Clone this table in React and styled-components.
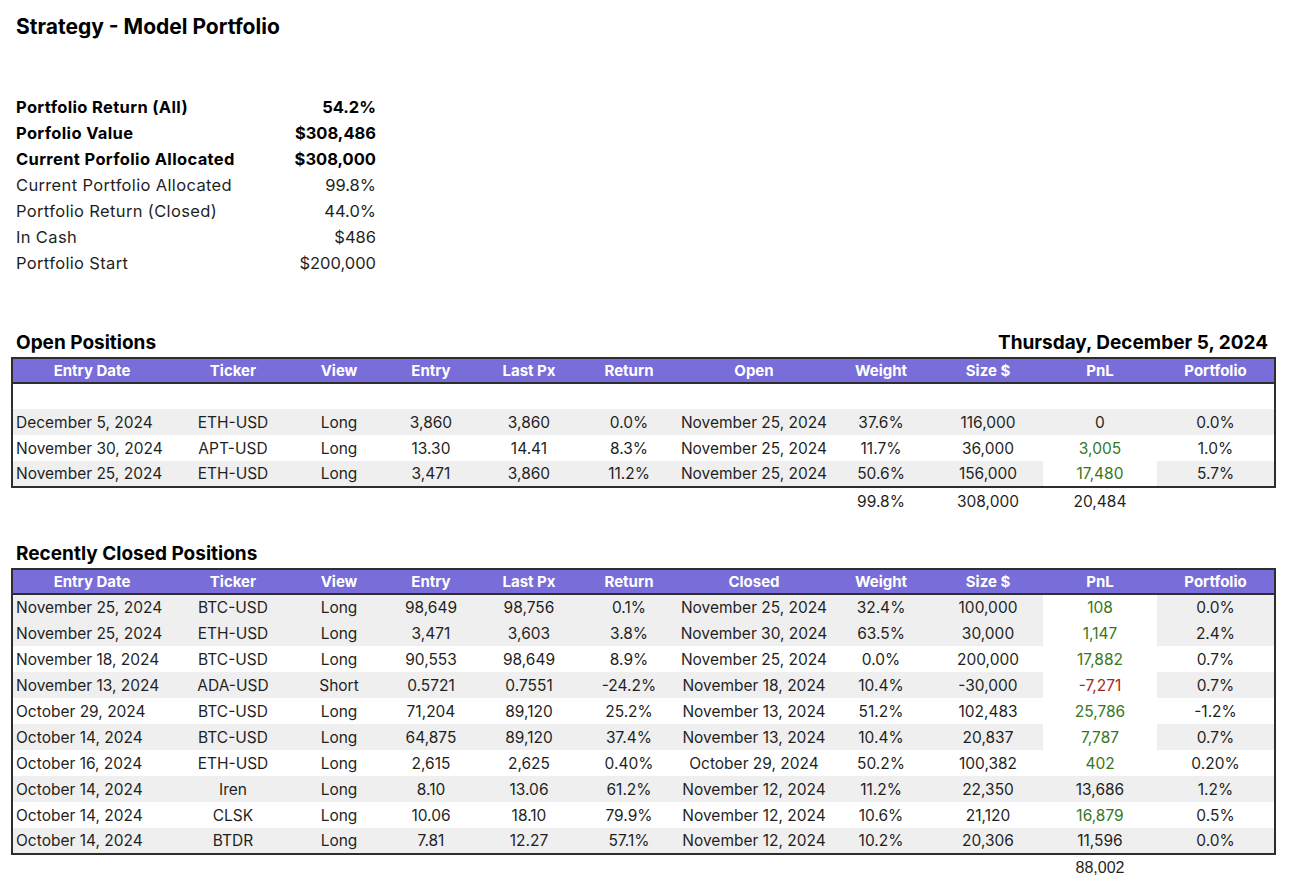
import styled, { createGlobalStyle } from 'styled-components'

const GlobalStyle = createGlobalStyle`
    body {
        margin: 0;
        background: #fff;
        font-family: Inter, "Liberation Sans", sans-serif;
        color: #1f1f1f;
    }
`

const GREEN = '#38761d'
const RED = '#a2281c'

const columnWidths = [159, 124, 88, 96, 100, 100, 150, 104, 110, 114, 118]

const summary = [
    { label: 'Portfolio Return (All)', value: '54.2%', bold: true },
    { label: 'Porfolio Value', value: '$308,486', bold: true },
    { label: 'Current Porfolio Allocated', value: '$308,000', bold: true },
    { label: 'Current Portfolio Allocated', value: '99.8%' },
    { label: 'Portfolio Return (Closed)', value: '44.0%' },
    { label: 'In Cash', value: '$486' },
    { label: 'Portfolio Start', value: '$200,000' },
]

const openRows = [
    { cells: null, band: false },
    { cells: ['December 5, 2024', 'ETH-USD', 'Long', '3,860', '3,860', '0.0%', 'November 25, 2024', '37.6%', '116,000', '0', '0.0%'], band: true },
    { cells: ['November 30, 2024', 'APT-USD', 'Long', '13.30', '14.41', '8.3%', 'November 25, 2024', '11.7%', '36,000', '3,005', '1.0%'], band: false, pnl: 'up' },
    { cells: ['November 25, 2024', 'ETH-USD', 'Long', '3,471', '3,860', '11.2%', 'November 25, 2024', '50.6%', '156,000', '17,480', '5.7%'], band: true, pnl: 'up', pnlPlain: true },
]

const closedRows = [
    { cells: ['November 25, 2024', 'BTC-USD', 'Long', '98,649', '98,756', '0.1%', 'November 25, 2024', '32.4%', '100,000', '108', '0.0%'], band: true, pnl: 'up', pnlPlain: true },
    { cells: ['November 25, 2024', 'ETH-USD', 'Long', '3,471', '3,603', '3.8%', 'November 30, 2024', '63.5%', '30,000', '1,147', '2.4%'], band: true, pnl: 'up', pnlPlain: true },
    { cells: ['November 18, 2024', 'BTC-USD', 'Long', '90,553', '98,649', '8.9%', 'November 25, 2024', '0.0%', '200,000', '17,882', '0.7%'], band: false, pnl: 'up' },
    { cells: ['November 13, 2024', 'ADA-USD', 'Short', '0.5721', '0.7551', '-24.2%', 'November 18, 2024', '10.4%', '-30,000', '-7,271', '0.7%'], band: true, pnl: 'down', pnlPlain: true },
    { cells: ['October 29, 2024', 'BTC-USD', 'Long', '71,204', '89,120', '25.2%', 'November 13, 2024', '51.2%', '102,483', '25,786', '-1.2%'], band: false, pnl: 'up' },
    { cells: ['October 14, 2024', 'BTC-USD', 'Long', '64,875', '89,120', '37.4%', 'November 13, 2024', '10.4%', '20,837', '7,787', '0.7%'], band: true, pnl: 'up', pnlPlain: true },
    { cells: ['October 16, 2024', 'ETH-USD', 'Long', '2,615', '2,625', '0.40%', 'October 29, 2024', '50.2%', '100,382', '402', '0.20%'], band: false, pnl: 'up' },
    { cells: ['October 14, 2024', 'Iren', 'Long', '8.10', '13.06', '61.2%', 'November 12, 2024', '11.2%', '22,350', '13,686', '1.2%'], band: true },
    { cells: ['October 14, 2024', 'CLSK', 'Long', '10.06', '18.10', '79.9%', 'November 12, 2024', '10.6%', '21,120', '16,879', '0.5%'], band: false, pnl: 'up' },
    { cells: ['October 14, 2024', 'BTDR', 'Long', '7.81', '12.27', '57.1%', 'November 12, 2024', '10.2%', '20,306', '11,596', '0.0%'], band: true },
]

const Page = styled.div`
    padding: 13px 18px 0 11px;
    width: 1263px;
`

const Title = styled.h1`
    margin: 0 0 0 5px;
    font-size: 21px;
    font-weight: 700;
    line-height: 28px;
    color: #000;
`

const Summary = styled.div`
    margin-top: 53px;
    width: 365px;
    display: grid;
    grid-template-columns: 1fr auto;
    grid-auto-rows: 26px;
    align-items: center;
    font-size: 16.5px;
`

const SummaryLabel = styled.div`
    padding-left: 5px;
    letter-spacing: 0.35px;
    font-weight: ${p => (p.$bold ? 700 : 400)};
    color: ${p => (p.$bold ? '#000' : '#1f1f1f')};
`

const SummaryValue = styled(SummaryLabel)`
    padding-left: 0;
    letter-spacing: 0;
    text-align: right;
`

const SectionHead = styled.div`
    display: flex;
    justify-content: space-between;
    align-items: flex-end;
    margin-top: ${p => p.$gap}px;
    height: 24px;
    padding: 0 6px 0 5px;
    font-size: 19px;
    font-weight: 700;
    color: #000;
`

const Table = styled.table`
    border-collapse: collapse;
    table-layout: fixed;
    width: 1263px;
    font-size: 15.5px;
    margin-top: 3px;
`

const BodyWrap = styled.tbody`
    border: 2px solid #2e2e2e;
`

const HeadRow = styled.tr`
    height: 25px;
    background: #786dd9;
    border: 2px solid #2e2e2e;
`

const HeadCell = styled.th`
    padding: 0;
    font-weight: 700;
    font-size: 15px;
    color: #fff;
    text-align: center;
`

const Row = styled.tr`
    height: 26px;
`

const Cell = styled.td`
    padding: 0 0 0 ${p => (p.$left ? '3px' : '0')};
    text-align: ${p => (p.$left ? 'left' : 'center')};
    white-space: nowrap;
    background: ${p => (p.$band ? '#efefef' : '#fff')};
    color: ${p => (p.$tone === 'up' ? GREEN : p.$tone === 'down' ? RED : '#1f1f1f')};
`

const TotalCell = styled.td`
    padding: 0;
    height: 26px;
    text-align: center;
    color: #1f1f1f;
    font-family: ${p => (p.$alt ? '"Liberation Sans", Arial, sans-serif' : 'inherit')};
    font-size: ${p => (p.$alt ? '16px' : 'inherit')};
`

const PositionsTable = ({ headers, rows, totals }) => (
    <Table>
        <colgroup>
            {columnWidths.map((w, i) => <col key={i} style={{ width: w }} />)}
        </colgroup>
        <thead>
            <HeadRow>
                {headers.map(h => <HeadCell key={h}>{h}</HeadCell>)}
            </HeadRow>
        </thead>
        <BodyWrap>
            {rows.map((row, r) => (
                <Row key={r}>
                    {columnWidths.map((_, c) => {
                        const isPnl = c === 9
                        return (
                            <Cell
                                key={c}
                                $left={c === 0}
                                $band={row.band && !(isPnl && row.pnlPlain)}
                                $tone={isPnl ? row.pnl : undefined}>
                                {row.cells ? row.cells[c] : ''}
                            </Cell>
                        )
                    })}
                </Row>
            ))}
        </BodyWrap>
        <tbody>
            <tr>
                {columnWidths.map((_, c) => (
                    <TotalCell key={c} $alt={totals.alt}>{totals.values[c] || ''}</TotalCell>
                ))}
            </tr>
        </tbody>
    </Table>
)

const baseHeaders = ['Entry Date', 'Ticker', 'View', 'Entry', 'Last Px', 'Return']
const tailHeaders = ['Weight', 'Size $', 'PnL', 'Portfolio']

export default function App() {
    return (
        <Page>
            <GlobalStyle />
            <Title>Strategy - Model Portfolio</Title>
            <Summary>
                {summary.map(s => [
                    <SummaryLabel key={s.label + 'l'} $bold={s.bold}>{s.label}</SummaryLabel>,
                    <SummaryValue key={s.label + 'v'} $bold={s.bold}>{s.value}</SummaryValue>,
                ])}
            </Summary>

            <SectionHead $gap={54}>
                <span>Open Positions</span>
                <span>Thursday, December 5, 2024</span>
            </SectionHead>
            <PositionsTable
                headers={[...baseHeaders, 'Open', ...tailHeaders]}
                rows={openRows}
                totals={{ values: { 7: '99.8%', 8: '308,000', 9: '20,484' } }}
            />

            <SectionHead $gap={27}>
                <span>Recently Closed Positions</span>
            </SectionHead>
            <PositionsTable
                headers={[...baseHeaders, 'Closed', ...tailHeaders]}
                rows={closedRows}
                totals={{ values: { 9: '88,002' }, alt: true }}
            />
        </Page>
    )
}
